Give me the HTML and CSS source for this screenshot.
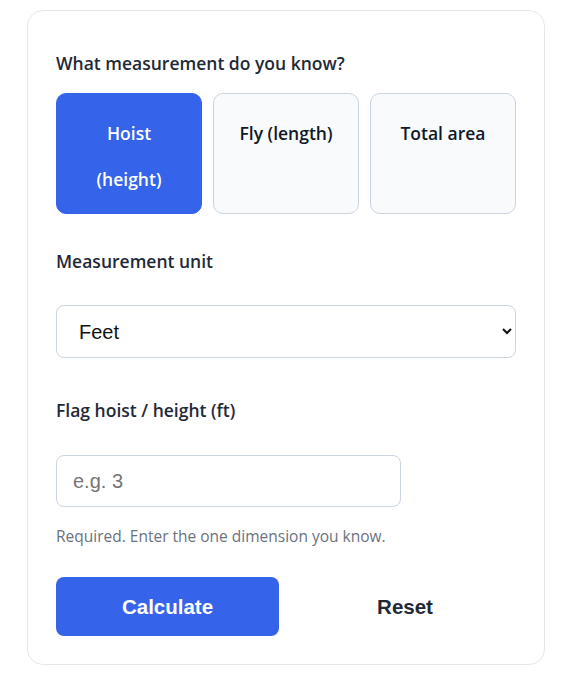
FILE: index.html
```html
<!DOCTYPE html>
<html lang="en">
<head>
    <meta charset="UTF-8">
    <meta name="viewport" content="width=device-width, initial-scale=1.0">
    <title>Flag Size Calculator</title>
    <link rel="stylesheet" href="styles.css">
</head>
<body>

    <div class="card">
        <div class="field field-first">
            <p class="field-label">What measurement do you know?</p>
            <div class="choices">
                <button class="choice active">Hoist (height)</button>
                <button class="choice">Fly (length)</button>
                <button class="choice">Total area</button>
            </div>
        </div>

        <div class="field field-unit">
            <label class="field-label" for="unit">Measurement unit</label>
            <select id="unit" class="unit-select">
                <option>Feet</option>
                <option>Inches</option>
                <option>Meters</option>
                <option>Centimeters</option>
            </select>
        </div>

        <div class="field field-size">
            <label class="field-label" for="size">Flag hoist / height (ft)</label>
            <input type="text" id="size" class="size-input" placeholder="e.g. 3">
            <p class="hint">Required. Enter the one dimension you know.</p>
        </div>

        <div class="actions">
            <button class="btn btn-primary">Calculate</button>
            <button class="btn btn-plain">Reset</button>
        </div>
    </div>

</body>
</html>
```

FILE: styles.css
```css
body {
    margin: 0;
    padding: 10px 0 0 27px;
    background-color: #fff;
    font-family: "Open Sans", "Noto Sans", sans-serif;
    color: #1f2937;
}

.card {
    width: 518px;
    box-sizing: border-box;
    padding: 28px 28px 28px;
    border: 1px solid #e5e7eb;
    border-radius: 16px;
    background-color: #fff;
}

.field-label {
    display: block;
    margin: 0;
    font-size: 17.5px;
    font-weight: 600;
    line-height: 24px;
    color: #1f2937;
}

.field-first {
    padding-top: 12px;
}

.choices {
    display: grid;
    grid-template-columns: repeat(3, 1fr);
    gap: 11px;
    margin-top: 18px;
}

.choice {
    height: 121px;
    padding: 16px 18px 0;
    box-sizing: border-box;
    border: 1px solid #cbd5e1;
    border-radius: 10px;
    background-color: #f8fafc;
    font-family: "Open Sans", "Noto Sans", sans-serif;
    font-size: 17.5px;
    font-weight: 600;
    line-height: 46px;
    color: #111827;
    text-align: center;
    display: flex;
    justify-content: center;
    align-items: flex-start;
    cursor: pointer;
}

.choice.active {
    background-color: #3563e9;
    border-color: #3563e9;
    color: #fff;
}

.field-unit {
    margin-top: 35px;
}

.unit-select {
    display: block;
    width: 100%;
    height: 53px;
    margin-top: 32px;
    padding: 0 11px 0 18px;
    box-sizing: border-box;
    border: 1px solid #cbd5e1;
    border-radius: 8px;
    background-color: #fff;
    font-family: "Liberation Sans", Arial, sans-serif;
    font-size: 20px;
    color: #111;
}

.field-size {
    margin-top: 40px;
}

.size-input {
    display: block;
    width: 345px;
    height: 52px;
    margin-top: 33px;
    padding: 0 16px;
    box-sizing: border-box;
    border: 1px solid #cbd5e1;
    border-radius: 8px;
    font-family: "Liberation Sans", Arial, sans-serif;
    font-size: 20px;
}

.size-input::placeholder {
    color: #757575;
}

.hint {
    margin: 18px 0 0;
    font-size: 15.5px;
    line-height: 22px;
    color: #6b7280;
}

.actions {
    display: grid;
    grid-template-columns: 223px 1fr;
    gap: 11px;
    margin-top: 30px;
}

.btn {
    height: 59px;
    border: none;
    border-radius: 8px;
    font-family: "Liberation Sans", Arial, sans-serif;
    font-size: 20.5px;
    font-weight: bold;
    cursor: pointer;
}

.btn-primary {
    background-color: #3563e9;
    color: #fff;
}

.btn-plain {
    padding-left: 10px;
    background-color: transparent;
    color: #1f2937;
}
```
